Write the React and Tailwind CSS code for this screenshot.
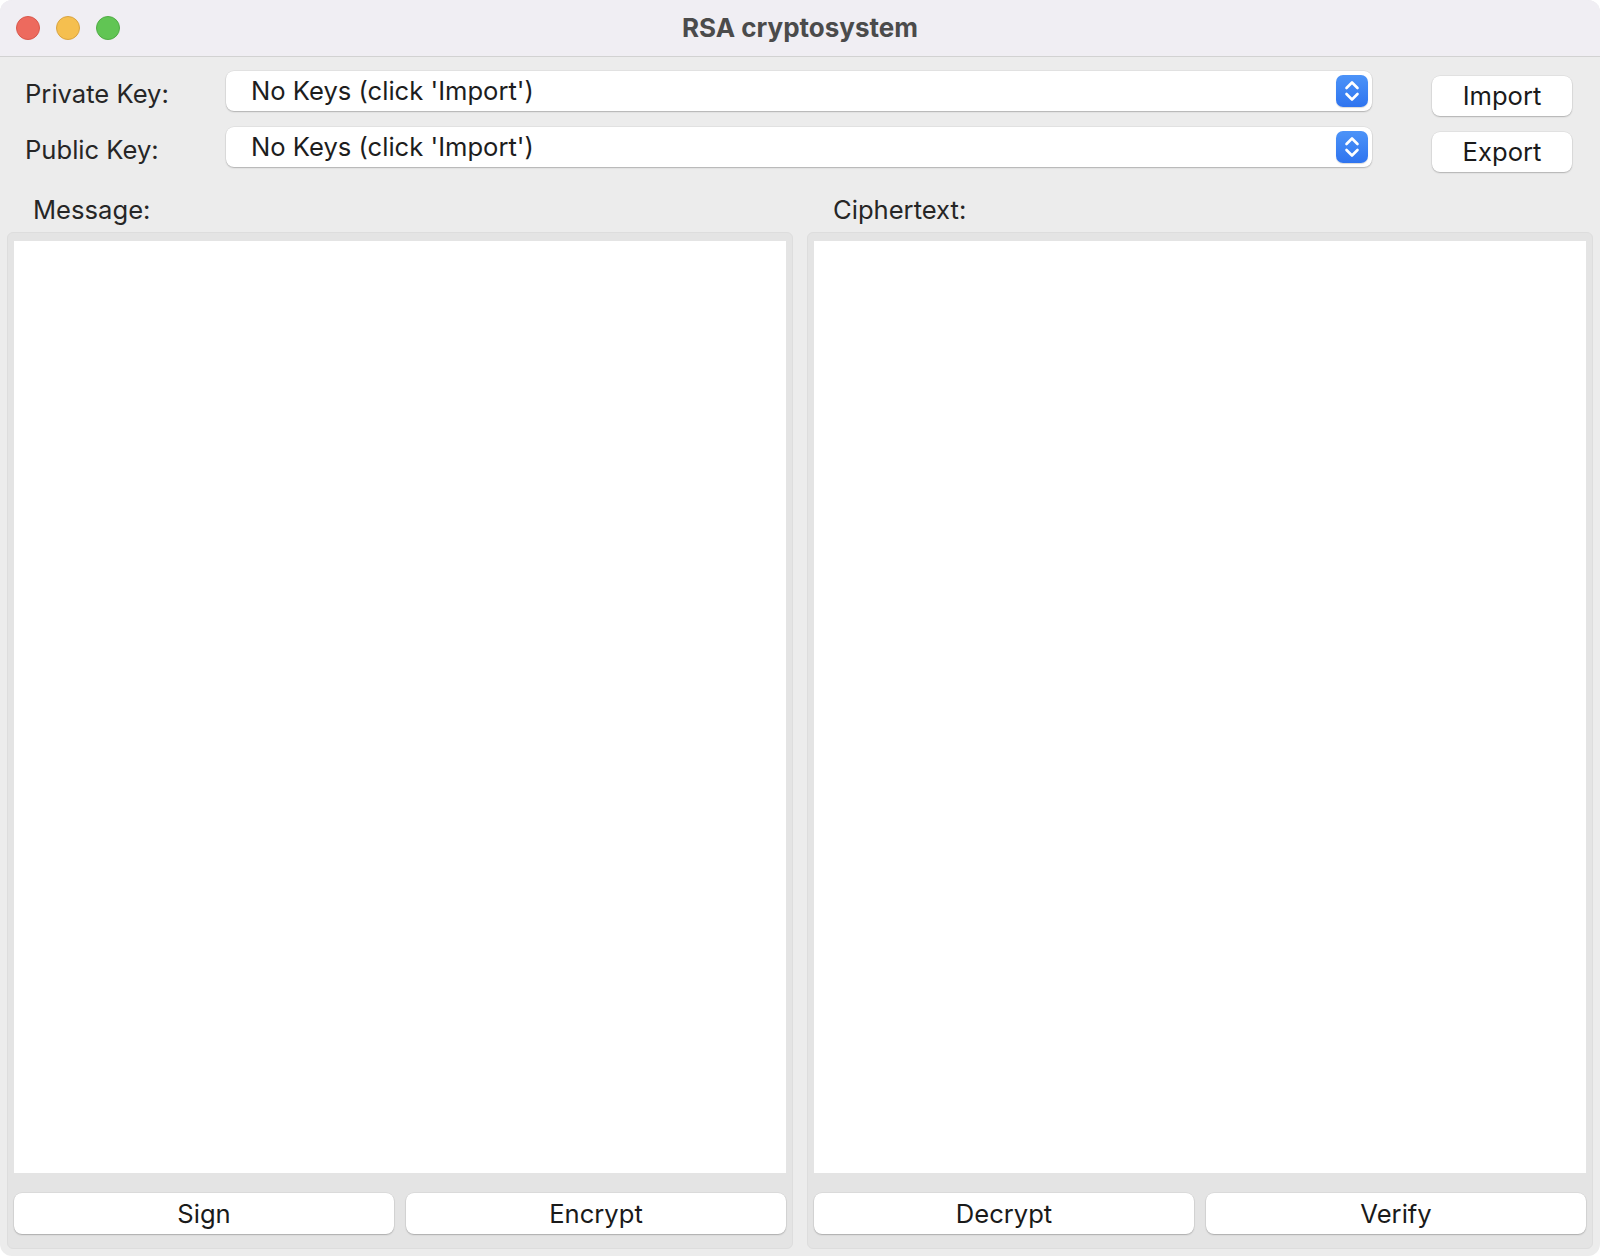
import React from "react";

function Stepper() {
  return (
    <div className="w-[32px] h-[32px] rounded-[7px] bg-gradient-to-b from-[#4c93f8] to-[#2f74ef] flex items-center justify-center shadow-[0_1px_1px_rgba(0,0,0,0.15)]">
      <svg width="32" height="32" viewBox="0 0 32 32" fill="none" stroke="white" strokeWidth="2.6" strokeLinecap="round" strokeLinejoin="round">
        <path d="M10.5 13 L16 7.5 L21.5 13" />
        <path d="M10.5 19 L16 24.5 L21.5 19" />
      </svg>
    </div>
  );
}

function Select() {
  return (
    <div className="h-[40px] w-[1146px] bg-white rounded-[8px] shadow-[0_1px_1.5px_rgba(0,0,0,0.22),0_0_0_0.5px_rgba(0,0,0,0.08)] flex items-center justify-between pl-[25px] pr-[4px]">
      <span className="text-[25.6px] text-[#1d1d1d] leading-none">No Keys (click 'Import')</span>
      <Stepper />
    </div>
  );
}

function Btn({ children, className = "" }) {
  return (
    <div className={"h-[40px] bg-white rounded-[8px] shadow-[0_1px_1.5px_rgba(0,0,0,0.22),0_0_0_0.5px_rgba(0,0,0,0.08)] flex items-center justify-center text-[25.6px] text-[#1a1a1a] leading-none " + className}>
      {children}
    </div>
  );
}

function Panel({ label, left, right }) {
  return (
    <div className="flex-1 flex flex-col min-w-0">
      <div className="h-[40px] pl-[26px] pt-[4px] flex items-center text-[25.6px] text-[#262626] leading-none">{label}</div>
      <div className="mt-[4px] flex-1 rounded-[6px] bg-[#e4e4e4] border border-[#dddddd] pt-[8px] px-[6px] pb-[14px] flex flex-col">
        <div className="flex-1 bg-white"></div>
        <div className="mt-[20px] flex gap-[12px]">
          <Btn className="flex-1 h-[41px]">{left}</Btn>
          <Btn className="flex-1 h-[41px]">{right}</Btn>
        </div>
      </div>
    </div>
  );
}

export default function App() {
  return (
    <div className="w-[1600px] h-[1256px] bg-white" style={{ fontFamily: "Inter, 'Noto Sans', sans-serif" }}>
      <div className="w-full h-full rounded-[12px] overflow-hidden bg-[#ececec] flex flex-col">
        <div className="h-[57px] shrink-0 bg-[#f0eef3] border-b border-[#d2d2d2] grid grid-cols-[1fr_auto_1fr] items-center">
          <div className="flex items-center gap-[16px] pl-[16px]">
            <div className="w-[24px] h-[24px] rounded-full bg-[#ed6a5e] border border-[#d9584c]"></div>
            <div className="w-[24px] h-[24px] rounded-full bg-[#f5bf4f] border border-[#d9a441]"></div>
            <div className="w-[24px] h-[24px] rounded-full bg-[#61c554] border border-[#50ac45]"></div>
          </div>
          <div className="text-[26px] font-bold text-[#4b4b4b] leading-none">RSA cryptosystem</div>
          <div></div>
        </div>

        <div className="pt-[14px] pl-[25px] pr-[28px] flex">
          <div className="flex flex-col gap-[16px]">
            <div className="flex items-center">
              <div className="w-[201px] pt-[5px] text-[25.6px] text-[#262626] leading-none">Private Key:</div>
              <Select />
            </div>
            <div className="flex items-center">
              <div className="w-[201px] pt-[5px] text-[25.6px] text-[#262626] leading-none">Public Key:</div>
              <Select />
            </div>
          </div>
          <div className="ml-auto mt-[5px] flex flex-col gap-[16px] w-[140px]">
            <Btn>Import</Btn>
            <Btn>Export</Btn>
          </div>
        </div>

        <div className="mt-[16px] flex-1 flex gap-[14px] px-[7px] pb-[7px]">
          <Panel label="Message:" left="Sign" right="Encrypt" />
          <Panel label="Ciphertext:" left="Decrypt" right="Verify" />
        </div>
      </div>
    </div>
  );
}
